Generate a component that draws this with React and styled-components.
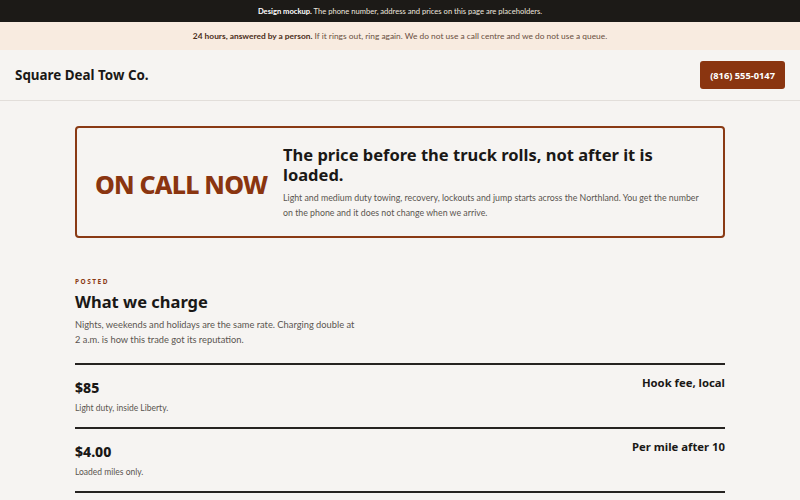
import React from "react";
import styled, { createGlobalStyle } from "styled-components";

const GlobalStyle = createGlobalStyle`
  html, body {
    margin: 0;
    padding: 0;
    background: #f6f4f2;
  }
  body {
    font-family: Lato, "Liberation Sans", sans-serif;
    color: #1a1816;
  }
`;

const HEAD = `"Noto Sans", "DejaVu Sans", sans-serif`;

const NoticeBar = styled.div`
  background: #1c1a17;
  color: #ece6df;
  height: 22px;
  display: flex;
  align-items: center;
  justify-content: center;
  font-size: 7.6px;
  b {
    font-weight: 700;
    color: #fff;
  }
`;

const PromiseBar = styled.div`
  background: #f8ebe0;
  color: #6a5040;
  height: 28px;
  display: flex;
  align-items: center;
  justify-content: center;
  font-size: 8.4px;
  b {
    color: #4a2d18;
    font-weight: 700;
  }
`;

const Header = styled.header`
  height: 50px;
  padding: 0 15px;
  display: flex;
  align-items: center;
  justify-content: space-between;
  border-bottom: 1px solid #e2deda;
`;

const Logo = styled.div`
  font-family: ${HEAD};
  font-weight: 700;
  font-size: 13.4px;
`;

const CallButton = styled.a`
  background: #8a3510;
  color: #fff;
  font-family: ${HEAD};
  font-weight: 700;
  font-size: 9.3px;
  padding: 0 10px;
  height: 28px;
  display: flex;
  align-items: center;
  border-radius: 3px;
  text-decoration: none;
`;

const Main = styled.main`
  width: 650px;
  margin: 0 auto;
  padding-top: 25px;
`;

const Hero = styled.section`
  border: 2px solid #8a3a14;
  border-radius: 4px;
  height: 112px;
  box-sizing: border-box;
  display: flex;
  align-items: center;
  padding: 0 18px;
  gap: 17px;
`;

const Badge = styled.div`
  font-family: ${HEAD};
  font-weight: 800;
  font-size: 25px;
  color: #8a3510;
  white-space: nowrap;
  width: 171px;
  letter-spacing: -0.8px;
  padding-top: 4px;
`;

const HeroText = styled.div`
  flex: 1;
`;

const HeroTitle = styled.h1`
  font-family: ${HEAD};
  font-weight: 700;
  font-size: 16.5px;
  line-height: 20px;
  margin: 0 0 5px;
`;

const Lead = styled.p`
  margin: 0;
  font-size: 8.8px;
  line-height: 15px;
  color: #5a5550;
`;

const Section = styled.section`
  padding-top: 39px;
`;

const Eyebrow = styled.div`
  font-family: ${HEAD};
  font-size: 6.5px;
  font-weight: 700;
  letter-spacing: 1.5px;
  color: #8a3a14;
  margin-bottom: 5px;
`;

const SectionTitle = styled.h2`
  font-family: ${HEAD};
  font-weight: 700;
  font-size: 16.5px;
  line-height: 22px;
  margin: 0 0 4px;
`;

const Intro = styled.p`
  margin: 0 0 16px;
  width: 284px;
  font-size: 9.3px;
  line-height: 15px;
  color: #5a5550;
`;

const PriceRow = styled.div`
  border-top: 2px solid #262321;
  height: 64px;
  box-sizing: border-box;
  display: flex;
  justify-content: space-between;
  padding-top: 10px;
`;

const Rule = styled.div`
  border-top: 2px solid #262321;
`;

const Amount = styled.div`
  font-family: ${HEAD};
  font-weight: 800;
  font-size: 14px;
  line-height: 20px;
  margin-top: 3px;
`;

const Note = styled.div`
  font-size: 8.5px;
  color: #5a5550;
  margin-top: 5px;
`;

const Label = styled.div`
  font-family: ${HEAD};
  font-weight: 700;
  font-size: 11.3px;
  line-height: 16px;
`;

const prices = [
  { amount: "$85", note: "Light duty, inside Liberty.", label: "Hook fee, local" },
  { amount: "$4.00", note: "Loaded miles only.", label: "Per mile after 10" },
];

export default function App() {
  return (
    <>
      <GlobalStyle />
      <NoticeBar>
        <span>
          <b>Design mockup.</b> The phone number, address and prices on this page are placeholders.
        </span>
      </NoticeBar>
      <PromiseBar>
        <span>
          <b>24 hours, answered by a person.</b> If it rings out, ring again. We do not use a call
          centre and we do not use a queue.
        </span>
      </PromiseBar>
      <Header>
        <Logo>Square Deal Tow Co.</Logo>
        <CallButton href="#">(816) 555-0147</CallButton>
      </Header>
      <Main>
        <Hero>
          <Badge>ON CALL NOW</Badge>
          <HeroText>
            <HeroTitle>The price before the truck rolls, not after it is loaded.</HeroTitle>
            <Lead>
              Light and medium duty towing, recovery, lockouts and jump starts across the
              Northland. You get the number on the phone and it does not change when we arrive.
            </Lead>
          </HeroText>
        </Hero>
        <Section>
          <Eyebrow>POSTED</Eyebrow>
          <SectionTitle>What we charge</SectionTitle>
          <Intro>
            Nights, weekends and holidays are the same rate. Charging double at 2 a.m. is how this
            trade got its reputation.
          </Intro>
          {prices.map((p) => (
            <PriceRow key={p.amount}>
              <div>
                <Amount>{p.amount}</Amount>
                <Note>{p.note}</Note>
              </div>
              <Label>{p.label}</Label>
            </PriceRow>
          ))}
          <Rule />
        </Section>
      </Main>
    </>
  );
}
